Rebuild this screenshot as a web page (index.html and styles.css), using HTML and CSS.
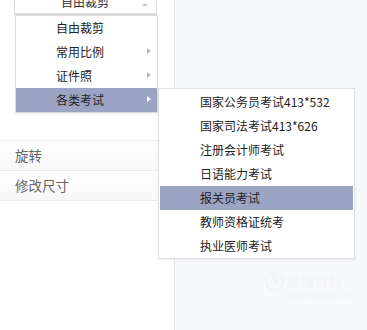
FILE: index.html
```html
<!DOCTYPE html>
<html>
<head>
<meta charset="utf-8">
<link rel="stylesheet" href="styles.css">
</head>
<body>
<div class="page">
  <aside class="panel">
    <div class="select">
      <span class="select-text">自由裁剪</span>
      <span class="up-arrow"></span>
    </div>
    <div class="rows">
      <div class="row">旋转</div>
      <div class="row">修改尺寸</div>
    </div>
  </aside>
  <main class="canvas">
    <div class="watermark">
      <span class="wm-logo">S</span>
      <div class="wm-text">
        <span class="wm-title">快懂百科</span>
        <span class="wm-sub">www.kuaidong.com</span>
      </div>
    </div>
  </main>
</div>

<ul class="menu">
  <li class="item">自由裁剪</li>
  <li class="item has-sub">常用比例<span class="caret"></span></li>
  <li class="item has-sub">证件照<span class="caret"></span></li>
  <li class="item has-sub active">各类考试<span class="caret"></span></li>
</ul>

<ul class="submenu">
  <li class="sub-item">国家公务员考试413*532</li>
  <li class="sub-item">国家司法考试413*626</li>
  <li class="sub-item">注册会计师考试</li>
  <li class="sub-item">日语能力考试</li>
  <li class="sub-item active">报关员考试</li>
  <li class="sub-item">教师资格证统考</li>
  <li class="sub-item">执业医师考试</li>
</ul>
</body>
</html>
```

FILE: styles.css
```css
* { box-sizing: border-box; }

html, body {
  margin: 0;
  padding: 0;
}

body {
  width: 367px;
  height: 330px;
  overflow: hidden;
  position: relative;
  font-family: "Noto Sans CJK SC", "Noto Sans", sans-serif;
  font-size: 12px;
  color: #222;
  background: #f7f8fc;
}

.page {
  display: flex;
  height: 330px;
}

.panel {
  width: 175px;
  flex: none;
  background: #fff;
  border-right: 1px solid #e4e6ec;
}

.select {
  margin: -10px 0 0 14px;
  width: 143px;
  height: 25px;
  border: 1px solid #dcdcdc;
  border-bottom: 2px solid #dadada;
  display: flex;
  align-items: center;
  justify-content: center;
  position: relative;
  background: #fff;
}

.select-text {
  line-height: 22px;
  color: #333;
  margin-left: -1px;
}

.up-arrow {
  position: absolute;
  right: 8px;
  top: 12px;
  width: 0;
  height: 0;
  border-left: 3px solid transparent;
  border-right: 3px solid transparent;
  border-bottom: 3px solid #c8c8c8;
}

.rows {
  margin-top: 125px;
}

.row {
  height: 30px;
  border-top: 1px solid #ebebeb;
  background: linear-gradient(#ffffff, #f8f8f8);
  padding-left: 15px;
  line-height: 29px;
  font-size: 13.5px;
  color: #666;
}

.row:last-child {
  border-bottom: 1px solid #ebebeb;
  height: 31px;
}

.canvas {
  flex: 1;
  position: relative;
  background: #f7f8fc;
}

.watermark {
  position: absolute;
  left: 90px;
  top: 272px;
  display: flex;
  align-items: flex-start;
  gap: 3px;
  opacity: 0.3;
}

.wm-logo {
  width: 19px;
  height: 19px;
  border: 2px solid #e6e8ef;
  border-radius: 50%;
  color: #e6e8ef;
  font: bold 12px/15px "Liberation Sans", sans-serif;
  text-align: center;
}

.wm-text {
  display: flex;
  flex-direction: column;
}

.wm-title {
  font-size: 13px;
  line-height: 18px;
  color: #e6e8ef;
  letter-spacing: 1px;
}

.wm-sub {
  font-size: 7px;
  line-height: 10px;
  color: #e9ebf2;
}

/* dropdown menu */
.menu {
  position: absolute;
  left: 15px;
  top: 15px;
  width: 143px;
  margin: 0;
  padding: 0;
  list-style: none;
  background: #fff;
  border: 1px solid #dcdcdc;
  box-shadow: 0 2px 3px rgba(0, 0, 0, 0.05);
}

.item {
  height: 24px;
  line-height: 24px;
  padding-left: 40px;
  position: relative;
  color: #222;
}

.item.active {
  background: #9ca4c4;
}

.caret {
  position: absolute;
  right: 6px;
  top: 8px;
  width: 0;
  height: 0;
  border-top: 3.5px solid transparent;
  border-bottom: 3.5px solid transparent;
  border-left: 4px solid #b8b8b8;
}

.item.active .caret {
  border-left-color: #fff;
}

/* submenu */
.submenu {
  position: absolute;
  left: 158px;
  top: 88px;
  width: 197px;
  margin: 0;
  padding: 1px 1px 0;
  list-style: none;
  background: #fff;
  border: 1px solid #e0e2e8;
  box-shadow: 0 1px 3px rgba(0, 0, 0, 0.06);
}

.sub-item {
  height: 24px;
  line-height: 24px;
  padding-left: 40px;
  color: #222;
}

.sub-item.active {
  background: #9ca4c4;
}
```
